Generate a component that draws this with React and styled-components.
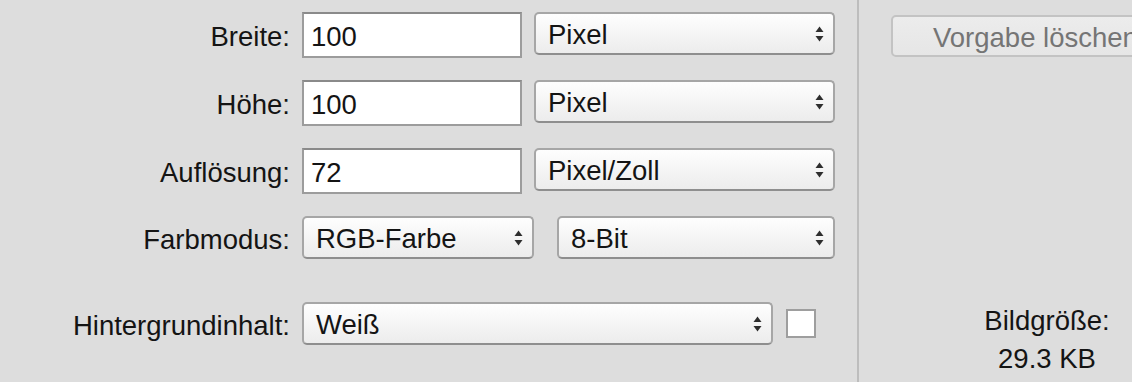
import React from "react";
import styled, { createGlobalStyle } from "styled-components";

const GlobalStyle = createGlobalStyle`
  html, body {
    margin: 0;
    padding: 0;
    overflow: hidden;
    background: #dddddd;
  }
  * {
    box-sizing: border-box;
  }
`;

const Window = styled.div`
  display: flex;
  width: 1132px;
  height: 382px;
  overflow: hidden;
  background: #dddddd;
  font-family: "Liberation Sans", Arial, sans-serif;
  font-size: 27.5px;
  color: #141414;
`;

const FormPanel = styled.div`
  flex: 0 0 857px;
  display: flex;
  flex-direction: column;
  gap: 20px;
  padding-top: 12px;
`;

const Divider = styled.div`
  flex: 0 0 2px;
  background: #bdbdbd;
`;

const SidePanel = styled.div`
  flex: 0 0 376px;
  display: flex;
  flex-direction: column;
  padding: 15px 0 0 32px;
`;

const Row = styled.div`
  display: grid;
  grid-template-columns: 290px auto;
  column-gap: 12px;
  align-items: start;
  margin-top: ${(p) => p.$extra || 0}px;
`;

const Label = styled.div`
  text-align: right;
  white-space: nowrap;
  padding-top: 2px;
  line-height: ${(p) => p.$h || 46}px;
`;

const Controls = styled.div`
  display: flex;
  align-items: ${(p) => (p.$center ? "center" : "flex-start")};
  gap: ${(p) => p.$gap || 12}px;
`;

const TextInput = styled.input`
  width: 220px;
  height: 46px;
  padding: 3px 0 0 7px;
  border: 2px solid #9c9c9c;
  border-top-color: #8a8a8a;
  background: #ffffff;
  font-family: "Liberation Sans", Arial, sans-serif;
  font-size: 27.5px;
  color: #141414;
  outline: none;
`;

const SelectBox = styled.div`
  width: ${(p) => p.$w}px;
  height: 43px;
  display: flex;
  align-items: center;
  justify-content: space-between;
  padding: 0 9px 0 12px;
  border: 2px solid #a6a6a6;
  border-bottom-color: #8e8e8e;
  border-radius: 5px;
  background: linear-gradient(#fefefe, #ececec);
  white-space: nowrap;
  span {
    padding-top: 3px;
  }
`;

const Swatch = styled.div`
  width: 30px;
  height: 29px;
  background: #ffffff;
  border: 2px solid #9e9e9e;
`;

const PresetButton = styled.button`
  width: 287px;
  height: 42px;
  padding: 3px 0 0 40px;
  text-align: left;
  border: 2px solid #c3c3c3;
  border-radius: 5px;
  background: linear-gradient(#ececec, #e6e6e6);
  font-family: "Liberation Sans", Arial, sans-serif;
  font-size: 27.5px;
  color: #757575;
  white-space: nowrap;
`;

const SizeInfo = styled.div`
  margin-top: 245px;
  margin-left: -32px;
  text-align: center;
  line-height: 38px;
`;

const Arrows = () => (
  <svg width="9" height="16" viewBox="0 0 9 16">
    <polygon points="4.5,0.5 8.5,6 0.5,6" fill="#2e2e2e" />
    <polygon points="0.5,10 8.5,10 4.5,15.5" fill="#2e2e2e" />
  </svg>
);

const Select = ({ w, children }) => (
  <SelectBox $w={w}>
    <span>{children}</span>
    <Arrows />
  </SelectBox>
);

const App = () => {
  return (
    <Window>
      <GlobalStyle />
      <FormPanel>
        <Row>
          <Label>Breite:</Label>
          <Controls>
            <TextInput defaultValue="100" />
            <Select w={301}>Pixel</Select>
          </Controls>
        </Row>
        <Row>
          <Label>Höhe:</Label>
          <Controls>
            <TextInput defaultValue="100" />
            <Select w={301}>Pixel</Select>
          </Controls>
        </Row>
        <Row>
          <Label>Auflösung:</Label>
          <Controls>
            <TextInput defaultValue="72" />
            <Select w={301}>Pixel/Zoll</Select>
          </Controls>
        </Row>
        <Row>
          <Label $h={43}>Farbmodus:</Label>
          <Controls $gap={23}>
            <Select w={232}>RGB-Farbe</Select>
            <Select w={278}>8-Bit</Select>
          </Controls>
        </Row>
        <Row $extra={21}>
          <Label $h={43}>Hintergrundinhalt:</Label>
          <Controls $center $gap={13}>
            <Select w={471}>Weiß</Select>
            <Swatch />
          </Controls>
        </Row>
      </FormPanel>
      <Divider />
      <SidePanel>
        <PresetButton disabled>Vorgabe löschen</PresetButton>
        <SizeInfo>
          <div>Bildgröße:</div>
          <div>29.3 KB</div>
        </SizeInfo>
      </SidePanel>
    </Window>
  );
};

export default App;
